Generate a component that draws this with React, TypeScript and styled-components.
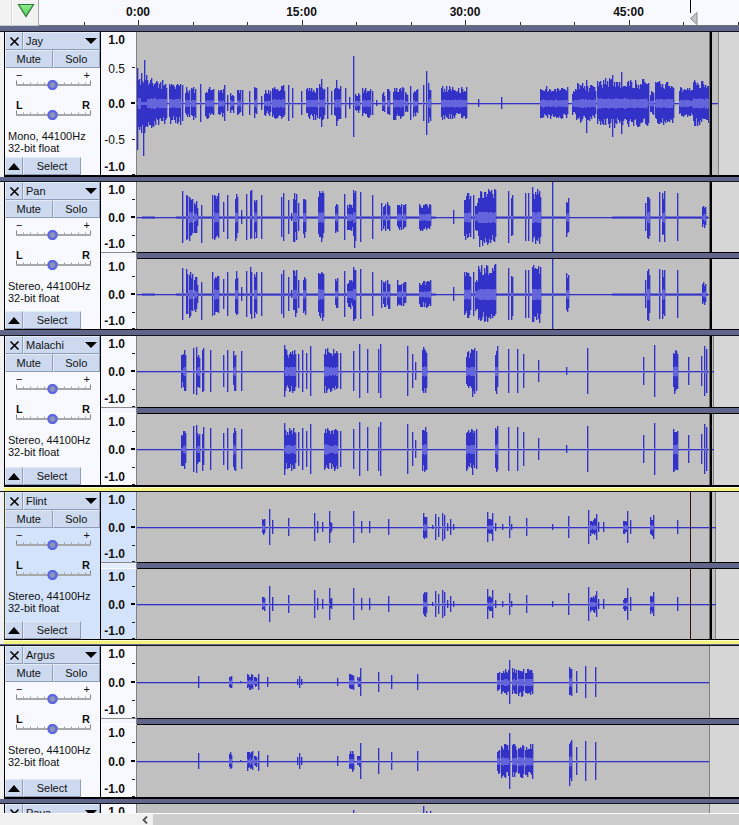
import React, { useMemo } from "react";
import styled, { createGlobalStyle } from "styled-components";

const WAVE_LEFT = 137;
const BAND = "#60668a";
const BUTTON = "#ccd9ef";

type C = [number, number, number, number?];

const JAY: C[] = [
  [137,137,35,47],[138,140,29],[141,141,30],[142,142,22],[143,143,20,53],[144,144,43,30],[145,146,30],[147,155,27],[156,166,23],[169,180,22],[182,182,18],
  [185,189,16],[191,195,17],[200,200,19],[205,213,16],[218,223,15],[224,224,18],[227,227,8],[230,233,11],[237,240,15],[242,242,13],
  [249,249,12],[254,256,16],[261,261,7],[264,270,13],[272,284,19],[288,288,18],[292,292,15],[301,301,12],[306,309,16],[310,317,17],
  [319,324,19],[321,321,24],[327,327,16],[331,331,12],[334,340,19],[336,336,23],[345,345,15],[349,349,6],[353,353,47,34],[355,359,11],
  [362,370,16],[372,372,12],[376,376,3],[382,384,11],[387,389,16],[393,403,18],[405,407,13],[410,410,17],[413,417,14],[423,423,18],
  [426,426,32],[428,430,21],[441,466,17],[478,478,4],[501,501,6],[540,567,17],[572,575,14],[576,587,20],[586,586,23,30],[588,595,18],
  [597,625,25],[612,612,28,34],[621,621,31],[625,647,24],[648,648,20],[650,653,13],[655,672,22],[673,673,15],[679,692,16],[693,709,24]
];
const PAN: C[] = [
  [182,182,26],[186,187,29],[189,192,25],[194,196,20],[197,197,9],[201,201,12,26],[212,212,22],[214,218,25],[223,223,15],[227,227,22],
  [235,237,25],[241,241,7],[246,246,23],[250,251,29],[254,256,25],[261,261,22],[281,281,20],[283,283,24],[288,288,17],[291,291,4],
  [293,296,25],[298,298,14],[303,305,23],[318,323,27],[335,337,18],[344,344,23],[347,352,15],[353,355,31],[360,360,25],[372,372,22],
  [381,381,14],[383,385,14],[387,389,16],[397,401,14],[403,405,14],[419,430,14],[453,453,7],[464,470,25],[473,473,22],[475,477,18],
  [478,488,30],[489,495,30],[508,508,26],[511,512,27],[525,525,24],[528,528,24],[532,540,30],[552,552,35],[566,568,22],[645,645,14],
  [647,649,28],[659,659,25],[662,664,27],[677,677,24],[702,702,10],[703,705,12]
];
const MALACHI: C[] = [
  [181,182,18],[183,185,22],[193,193,23],[196,196,24],[197,199,18],[202,203,23],[210,210,21],[223,223,16],[227,227,21],[233,235,23],
  [241,241,20],[284,284,26],[285,295,22],[298,298,17],[302,302,21],[306,306,18],[310,310,25],[324,327,24],[327,331,22],[332,337,23],
  [340,340,18],[353,353,20],[359,359,27],[367,367,22],[378,378,22],[380,380,27],[407,407,25],[412,412,17],[415,415,9],[422,426,25],
  [466,471,22],[472,474,26],[476,476,20],[495,497,25],[508,508,22],[517,517,22],[523,523,17],[538,538,11],[566,566,4],[587,587,23],
  [643,643,14],[654,654,26],[673,677,25],[688,688,14],[701,701,15],[704,704,25],[706,706,22]
];
const FLINT: C[] = [
  [262,264,8],[269,269,18],[272,272,7],[288,288,9],[314,314,14],[317,317,6],[322,322,5],[329,329,16],[330,331,6],[353,353,16],[361,361,6],
  [369,369,6],[388,388,8],[423,426,14],[432,432,2],[435,435,13],[438,438,10],[442,442,14],[444,444,12],[447,447,4],[450,450,8],[453,453,3],
  [487,492,9],[487,487,15],[492,492,14],[495,495,4],[502,502,3],[509,509,11],[511,511,3],[526,526,9],[552,552,3],[568,568,11],[588,588,17],
  [590,595,9],[596,596,13],[598,598,5],[603,603,5],[623,627,7],[627,627,16],[630,630,7],[650,653,10],[653,653,12],[677,677,7]
];
const ARGUS: C[] = [
  [198,198,6],[229,231,8],[240,240,1],[247,252,8],[254,256,5],[258,258,8],[267,267,5],[297,297,3],[299,299,6],[301,301,3],[337,337,4],
  [349,353,9],[357,359,5],[360,360,14],[378,378,10],[391,391,7],[417,417,8],[497,499,11],[501,508,14],[509,509,22],[512,516,14],[518,523,15],
  [525,532,14],[569,571,20],[576,576,11],[585,585,16],[595,595,15]
];
const ARGUS2: C[] = ARGUS.map(([a, b, c]) => [a, b, Math.round(c * 1.25)] as C);
const PAVA: C[] = [[352,353,69],[423,423,70],[426,426,65],[430,430,65]];

function rng(seed: number) {
  let s = seed >>> 0;
  return () => {
    s = (s + 0x6d2b79f5) >>> 0;
    let t = s;
    t = Math.imul(t ^ (t >>> 15), t | 1);
    t ^= t + Math.imul(t ^ (t >>> 7), t | 61);
    return ((t ^ (t >>> 14)) >>> 0) / 4294967296;
  };
}

function buildPaths(data: C[], h: number, seed: number) {
  const r = rng(seed);
  const mid = Math.floor(h / 2);
  let peak = "";
  let rms = "";
  for (const [a, b, amp, low] of data) {
    const x0 = a - WAVE_LEFT;
    const x1 = b - WAVE_LEFT;
    for (let x = x0; x <= x1; x++) {
      const wide = x1 > x0;
      const up = wide ? Math.round(amp * (0.6 + 0.4 * r())) : amp;
      const down = wide ? Math.round(amp * (0.6 + 0.4 * r())) : low ?? amp;
      peak += `M${x} ${mid - up}h1.35V${mid + down}h-1.35z`;
      const v = x1 - x0 >= 2 ? Math.max(1, Math.round(amp * 0.14 + r() * 1.3)) : amp > 8 ? 1 : 0;
      if (v > 0) rms += `M${x} ${mid - v}h1V${mid + v + 1}h-1z`;
    }
  }
  return { peak, rms, mid };
}

const Global = createGlobalStyle`
  html, body { margin: 0; padding: 0; height: 100%; overflow: hidden; background: #f0f0f0; }
  #root { height: 100%; }
  * { box-sizing: border-box; }
`;

const Page = styled.div`
  display: flex;
  flex-direction: column;
  width: 739px;
  height: 825px;
  overflow: hidden;
  font-family: "Liberation Sans", Arial, sans-serif;
  color: #111;
`;

const TimeRuler = styled.header`
  display: flex;
  flex: none;
  height: 26px;
`;
const RulerCap = styled.div`
  flex: none;
  width: 12px;
  background: #f2f2f2;
  border-right: 1px solid #d8d8d8;
  border-bottom: 1px solid #c8c8c8;
`;
const PlayCell = styled.div`
  flex: none;
  width: 27px;
  display: flex;
  justify-content: center;
  padding-top: 3px;
  background: #f2f2f2;
  border-left: 1px solid #fff;
  border-right: 1px solid #a8a8a8;
  border-bottom: 1px solid #c8c8c8;
`;
const Scale = styled.div`
  position: relative;
  flex: 1;
  background: #f8f9ff;
  border-bottom: 1px solid #707070;
`;
const ScaleDrawing = styled.svg`
  position: absolute;
  inset: 0;
  display: block;
`;
const TimeLabel = styled.span<{ $x: number }>`
  position: absolute;
  top: 6px;
  left: ${(p) => p.$x - 39 - 30}px;
  width: 60px;
  text-align: center;
  font-size: 12px;
  line-height: 13px;
  font-weight: 700;
`;

const Tracks = styled.main`
  flex: 1;
  min-height: 0;
  overflow: hidden;
`;

const Gap = styled.div`
  display: flex;
  flex-direction: column;
`;
const GapBlack = styled.div<{ $h: number }>`
  height: ${(p) => p.$h}px;
  margin-left: 4px;
  background: #000;
`;
const GapBand = styled.div<{ $h: number }>`
  height: ${(p) => p.$h}px;
  background: ${BAND};
`;
const GapEdge = styled.div`
  height: 1px;
  background: #14141e;
`;
const GapPale = styled.div`
  height: 1px;
  margin-left: 4px;
  background: #fbfbd0;
`;
const GapYellow = styled.div<{ $h: number }>`
  height: ${(p) => p.$h}px;
  margin-left: 4px;
  background: #f2f27c;
`;

const TrackRow = styled.section`
  display: flex;
  padding-left: 4px;
  background: #f2f2f2;
`;
const Panel = styled.div<{ $selected?: boolean }>`
  flex: none;
  width: 97px;
  display: flex;
  flex-direction: column;
  border-left: 1px solid ${(p) => (p.$selected ? "#3c3c20" : "#000")};
  border-right: 1px solid #000;
  background: ${(p) => (p.$selected ? "#d4e3fc" : "#f8f9ff")};
`;
const PanelButton = styled.div`
  display: flex;
  align-items: center;
  justify-content: center;
  height: 18px;
  font-size: 11px;
  background: ${BUTTON};
  border-top: 1px solid #e4ebf8;
  border-left: 1px solid #e4ebf8;
  border-right: 1px solid #8f9db8;
  border-bottom: 1px solid #8f9db8;
`;
const ButtonRow = styled.div`
  display: flex;
  flex: none;
`;
const CloseButton = styled(PanelButton)`
  flex: none;
  width: 18px;
`;
const TitleButton = styled(PanelButton)`
  flex: 1;
  justify-content: space-between;
  padding: 0 2px;
`;
const ToggleButton = styled(PanelButton)`
  flex: 1;
`;
const CollapseButton = styled(PanelButton)`
  flex: none;
  width: 18px;
`;
const SelectButton = styled(PanelButton)`
  flex: none;
  width: 58px;
`;
const SliderLabels = styled.div<{ $gap: number; $bold?: boolean }>`
  display: flex;
  justify-content: space-between;
  height: 10px;
  margin-top: ${(p) => p.$gap}px;
  padding: 0 10px 0 11px;
  font-size: 11px;
  line-height: 10px;
  font-weight: ${(p) => (p.$bold ? 700 : 400)};
`;
const SliderDrawing = styled.svg`
  display: block;
  flex: none;
`;
const TrackInfo = styled.div`
  margin-top: 10px;
  padding-left: 3px;
  font-size: 11px;
  line-height: 12px;
  white-space: nowrap;
`;
const PanelFooter = styled.div`
  display: flex;
  flex: none;
  margin-top: auto;
`;

const Channels = styled.div`
  flex: 1;
  min-width: 0;
  display: flex;
  flex-direction: column;
`;
const ChannelRow = styled.div<{ $h: number }>`
  display: flex;
  flex: none;
  height: ${(p) => p.$h}px;
`;
const Scales = styled.div<{ $selected?: boolean }>`
  position: relative;
  flex: none;
  width: 36px;
  background: ${(p) => (p.$selected ? "#d4e3fc" : "#f8f9ff")};
  border-right: 1px solid #808080;
`;
const ScaleLabel = styled.span<{ $top: number; $bold: boolean }>`
  position: absolute;
  right: 11px;
  top: ${(p) => p.$top - 6}px;
  font-size: 12px;
  line-height: 14px;
  font-weight: ${(p) => (p.$bold ? 700 : 400)};
`;
const TickDrawing = styled.svg`
  position: absolute;
  top: 0;
  right: 0;
  display: block;
`;
const WaveArea = styled.div`
  position: relative;
  flex: 1;
  min-width: 0;
  overflow: hidden;
  background: #d6d6d6;
`;
const ClipBody = styled.div<{ $w: number }>`
  height: 100%;
  width: ${(p) => p.$w}px;
  background: #c0c0c0;
  border-right: 1px solid #808080;
`;
const WaveDrawing = styled.svg`
  position: absolute;
  inset: 0;
  display: block;
`;
const Cursor = styled.div<{ $x: number; $color: string; $w: number; $shade?: boolean }>`
  position: absolute;
  top: 0;
  bottom: 0;
  left: ${(p) => p.$x - WAVE_LEFT}px;
  width: ${(p) => p.$w}px;
  background: ${(p) => p.$color};
  box-shadow: ${(p) => (p.$shade ? "-1px 0 0 #707070" : "none")};
`;

const ChannelGapRow = styled.div`
  display: flex;
  flex: none;
  height: 7px;
`;
const ScaleGap = styled.div<{ $selected?: boolean }>`
  flex: none;
  width: 36px;
  background: ${(p) => (p.$selected ? "#e6eefc" : "#f4f6ff")};
  border-top: 1px solid #8a8a8a;
  border-bottom: 1px solid #ffffff;
  border-right: 1px solid #808080;
`;
const WaveGap = styled.div`
  flex: 1;
  background: ${BAND};
  border-top: 1px solid #000;
  border-bottom: 1px solid #000;
`;

const HScroll = styled.footer`
  flex: none;
  display: flex;
  height: 12px;
  border-top: 1px solid #fff;
  background: #f0f0f0;
`;
const ArrowCell = styled.div`
  flex: none;
  width: 153px;
  display: flex;
  justify-content: flex-end;
  align-items: center;
  padding-right: 5px;
`;
const Thumb = styled.div`
  flex: 1;
  background: #cdcdcd;
`;

const Slider = () => {
  const ticks = [];
  for (let i = 1; i < 11; i++) {
    const x = 11.5 + i * 6.8;
    ticks.push(<path key={i} d={`M${Math.round(x) + 0.5} 2.5v2`} stroke="#a0a0a0" />);
  }
  return (
    <SliderDrawing width="95" height="10" viewBox="0 0 95 10">
      <path d="M11.5 0.5v4M85.5 0.5v4" stroke="#808080" />
      {ticks}
      <rect x="11" y="4" width="75" height="2" fill="#a8a8a8" />
      <circle cx="47.5" cy="5" r="4" fill="#8e94b4" stroke="#5a68e6" strokeWidth="2.4" />
    </SliderDrawing>
  );
};

type Channel = { h: number; data: C[]; seed: number };
type TrackDef = {
  name: string;
  info: string;
  selected?: boolean;
  clipEnd: number;
  lineEnd: number;
  cursor: boolean;
  marker?: boolean;
  thick?: [number, number][];
  mono?: boolean;
  channels: Channel[];
};

const Wave = ({ track, ch }: { track: TrackDef; ch: Channel }) => {
  const { peak, rms, mid } = useMemo(() => buildPaths(ch.data, ch.h, ch.seed), [ch]);
  return (
    <WaveArea>
      <ClipBody $w={track.clipEnd - WAVE_LEFT} />
      <WaveDrawing width="602" height={ch.h} viewBox={`0 0 602 ${ch.h}`}>
        <rect x="0" y={mid} width={track.lineEnd - WAVE_LEFT} height="1.3" fill="#3232c8" />
        {(track.thick || []).map(([a, b]) => (
          <rect key={a} x={a - WAVE_LEFT} y={mid - 0.5} width={b - a} height="2" fill="#3232c8" />
        ))}
        <path d={peak} fill="#3232c8" />
        <path d={rms} fill="#6464dc" />
      </WaveDrawing>
      {track.marker && <Cursor $x={690} $w={1} $color="#3c0c10" />}
      {track.cursor && <Cursor $x={710} $w={2} $color="#000" $shade />}
    </WaveArea>
  );
};

const ScaleColumn = ({ h, mono, selected }: { h: number; mono?: boolean; selected?: boolean }) => {
  const q = [Math.round(h / 4) - 1, Math.floor(h / 2), Math.round((3 * h) / 4), h - 1];
  return (
    <Scales $selected={selected}>
      <ScaleLabel $top={7} $bold>1.0</ScaleLabel>
      {mono && <ScaleLabel $top={q[0] + 1} $bold={false}>0.5</ScaleLabel>}
      <ScaleLabel $top={q[1]} $bold>0.0</ScaleLabel>
      {mono && <ScaleLabel $top={q[2]} $bold={false}>-0.5</ScaleLabel>}
      <ScaleLabel $top={h - 9} $bold>-1.0</ScaleLabel>
      <TickDrawing width="6" height={h} viewBox={`0 0 6 ${h}`} shapeRendering="crispEdges">
        <rect x="2" y={q[0]} width="3" height="1" fill="#222" />
        <rect x="1" y={q[1] - 1} width="4" height="2" fill="#000" />
        <rect x="2" y={q[2]} width="3" height="1" fill="#222" />
        <rect x="2" y={q[3]} width="3" height="1" fill="#222" />
      </TickDrawing>
    </Scales>
  );
};

const Track = ({ track }: { track: TrackDef }) => (
  <TrackRow>
    <Panel $selected={track.selected}>
      <ButtonRow>
        <CloseButton>
          <svg width="11" height="11" viewBox="0 0 11 11">
            <path d="M1.5 1.5l8 8M9.5 1.5l-8 8" stroke="#000" strokeWidth="1.6" fill="none" />
          </svg>
        </CloseButton>
        <TitleButton>
          <span>{track.name}</span>
          <svg width="12" height="6" viewBox="0 0 12 6">
            <path d="M0 0h12L6 6z" fill="#000" />
          </svg>
        </TitleButton>
      </ButtonRow>
      <ButtonRow>
        <ToggleButton>Mute</ToggleButton>
        <ToggleButton>Solo</ToggleButton>
      </ButtonRow>
      <SliderLabels $gap={2}>
        <span>−</span>
        <span>+</span>
      </SliderLabels>
      <Slider />
      <SliderLabels $gap={10} $bold>
        <span>L</span>
        <span>R</span>
      </SliderLabels>
      <Slider />
      <TrackInfo>
        {track.info}
        <br />
        32-bit float
      </TrackInfo>
      <PanelFooter>
        <CollapseButton>
          <svg width="12" height="7" viewBox="0 0 12 7">
            <path d="M0 7h12L6 0z" fill="#000" />
          </svg>
        </CollapseButton>
        <SelectButton>Select</SelectButton>
      </PanelFooter>
    </Panel>
    <Channels>
      {track.channels.map((ch, i) => (
        <React.Fragment key={ch.seed}>
          {i > 0 && (
            <ChannelGapRow>
              <ScaleGap $selected={track.selected} />
              <WaveGap />
            </ChannelGapRow>
          )}
          <ChannelRow $h={ch.h}>
            <ScaleColumn h={ch.h} mono={track.mono} selected={track.selected} />
            <Wave track={track} ch={ch} />
          </ChannelRow>
        </React.Fragment>
      ))}
    </Channels>
  </TrackRow>
);

const TRACKS: TrackDef[] = [
  { name: "Jay", info: "Mono, 44100Hz", mono: true, clipEnd: 719, lineEnd: 718, cursor: true, channels: [{ h: 143, data: JAY, seed: 11 }] },
  {
    name: "Pan", info: "Stereo, 44100Hz", clipEnd: 711, lineEnd: 709, cursor: true,
    thick: [[142, 155], [176, 436], [464, 568], [612, 708]],
    channels: [{ h: 70, data: PAN, seed: 21 }, { h: 70, data: PAN, seed: 22 }]
  },
  {
    name: "Malachi", info: "Stereo, 44100Hz", clipEnd: 714, lineEnd: 714, cursor: true,
    channels: [{ h: 71, data: MALACHI, seed: 31 }, { h: 71, data: MALACHI, seed: 32 }]
  },
  {
    name: "Flint", info: "Stereo, 44100Hz", selected: true, clipEnd: 716, lineEnd: 716, cursor: true, marker: true,
    channels: [{ h: 70, data: FLINT, seed: 41 }, { h: 70, data: FLINT, seed: 42 }]
  },
  {
    name: "Argus", info: "Stereo, 44100Hz", clipEnd: 710, lineEnd: 709, cursor: false,
    channels: [{ h: 72, data: ARGUS, seed: 51 }, { h: 72, data: ARGUS2, seed: 52 }]
  },
  { name: "Pava", info: "Stereo, 44100Hz", clipEnd: 710, lineEnd: 709, cursor: false, channels: [{ h: 144, data: PAVA, seed: 61 }] }
];

const TIMES: [string, number][] = [["0:00", 138], ["15:00", 301.5], ["30:00", 465], ["45:00", 628.5]];

const NormalGap = ({ black, band }: { black: number; band: number }) => (
  <Gap>
    <GapBlack $h={black} />
    <GapBand $h={band} />
    <GapEdge />
  </Gap>
);

export default function App() {
  const ticks: React.ReactNode[] = [];
  for (let i = -1; i < 12; i++) {
    const x = Math.round(138 + i * 54.5) - 39;
    if (x > 0 && x < 700) {
      ticks.push(<rect key={i} x={x} y={(i + 3) % 3 === 0 ? 20 : 22} width="1" height="5" fill="#303040" />);
    }
  }
  return (
    <Page>
      <Global />
      <TimeRuler>
        <RulerCap />
        <PlayCell>
          <svg width="18" height="15" viewBox="0 0 18 15">
            <defs>
              <linearGradient id="playFill" x1="0" y1="0" x2="0" y2="1">
                <stop offset="0" stopColor="#8cec8c" />
                <stop offset="1" stopColor="#5ccc5c" />
              </linearGradient>
            </defs>
            <path d="M1.5 1.5h15L9 13.5z" fill="url(#playFill)" stroke="#2c7a3c" strokeWidth="1.2" />
          </svg>
        </PlayCell>
        <Scale>
          <ScaleDrawing width="700" height="25" viewBox="0 0 700 25" shapeRendering="crispEdges">
            {ticks}
            <rect x="651" y="0" width="1" height="13" fill="#000" />
          </ScaleDrawing>
          <ScaleDrawing width="700" height="25" viewBox="0 0 700 25">
            <path d="M658 12.5v12l-6.5-6z" fill="#c4c4c4" stroke="#8a8a8a" />
          </ScaleDrawing>
          {TIMES.map(([t, x]) => (
            <TimeLabel key={t} $x={x}>{t}</TimeLabel>
          ))}
        </Scale>
      </TimeRuler>
      <Tracks>
        <Gap>
          <GapBand $h={5} />
          <GapEdge />
        </Gap>
        <Track track={TRACKS[0]} />
        <NormalGap black={2} band={4} />
        <Track track={TRACKS[1]} />
        <NormalGap black={1} band={5} />
        <Track track={TRACKS[2]} />
        <Gap>
          <GapBlack $h={2} />
          <GapPale />
          <GapYellow $h={3} />
          <GapEdge />
        </Gap>
        <Track track={TRACKS[3]} />
        <Gap>
          <GapBlack $h={1} />
          <GapPale />
          <GapYellow $h={3} />
          <GapBand $h={1} />
          <GapEdge />
        </Gap>
        <Track track={TRACKS[4]} />
        <NormalGap black={2} band={4} />
        <Track track={TRACKS[5]} />
      </Tracks>
      <HScroll>
        <ArrowCell>
          <svg width="6" height="8" viewBox="0 0 6 8">
            <path d="M5 0.5L1.5 4L5 7.5" fill="none" stroke="#505050" strokeWidth="1.8" />
          </svg>
        </ArrowCell>
        <Thumb />
      </HScroll>
    </Page>
  );
}
